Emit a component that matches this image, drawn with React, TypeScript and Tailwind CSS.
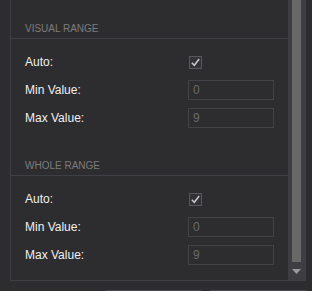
import React from "react";

function Check() {
  return (
    <div className="ml-[1px] flex h-[13px] w-[13px] items-center justify-center border border-[#58585c] bg-[#333337]">
      <svg width="11" height="11" viewBox="0 0 11 11">
        <path d="M1.8 5.8 L4.3 8.3 L9.2 2" fill="none" stroke="#c8c8c8" strokeWidth="1.5" />
      </svg>
    </div>
  );
}

function Field({ value }: { value: string }) {
  return (
    <div className="flex h-[20px] w-[86px] items-center border border-[#434346] pl-[4px] text-[12px] text-[#6a6a6a]">
      {value}
    </div>
  );
}

function Row({ label, children }: { label: string; children: React.ReactNode }) {
  return (
    <div className="flex h-[20px] items-center">
      <div className="w-[177px] pl-[14px] text-[12px] leading-[20px] text-[#f0f0f0]">{label}</div>
      {children}
    </div>
  );
}

function Section({ title, top, bottom }: { title: string; top: number; bottom: number }) {
  return (
    <div>
      <div
        className={`flex items-end border-b border-[#3f3f46] pl-[14px] pb-[3px] text-[10px] leading-[12px] text-[#7c7c7c] ${top === 0 ? "h-[39px]" : "mt-[9px] h-[39px]"}`}
      >
        {title}
      </div>
      <div className={`flex flex-col gap-[8px] pt-[13px] ${bottom ? "pb-[15px]" : ""}`}>
        <Row label="Auto:">
          <Check />
        </Row>
        <Row label="Min Value:">
          <Field value="0" />
        </Row>
        <Row label="Max Value:">
          <Field value="9" />
        </Row>
      </div>
    </div>
  );
}

export default function App() {
  return (
    <div
      className="h-[291px] w-[312px] overflow-hidden bg-[#2d2d30]"
      style={{ fontFamily: '"Liberation Sans", Arial, sans-serif' }}
    >
      <div className="ml-[10px] flex h-[281px] w-[296px] border-b border-l border-[#3f3f46]">
        <div className="flex-1">
          <Section title="VISUAL RANGE" top={0} bottom={0} />
          <Section title="WHOLE RANGE" top={1} bottom={1} />
        </div>
        <div className="flex w-[18px] flex-col bg-[#3e3e42]">
          <div className="ml-[4px] h-[262px] w-[9px] bg-[#686868]" />
          <div className="ml-[4px] mt-[7px] flex w-[9px] justify-center">
            <svg width="9" height="5" viewBox="0 0 9 5">
              <path d="M0 0 H9 L4.5 5 Z" fill="#9a9a9a" />
            </svg>
          </div>
        </div>
      </div>
      <div className="mt-[9px] flex gap-[8px] pl-[105px]">
        <div className="h-[1px] w-[97px] bg-[#46464a]" />
        <div className="h-[1px] w-[97px] bg-[#46464a]" />
      </div>
    </div>
  );
}
